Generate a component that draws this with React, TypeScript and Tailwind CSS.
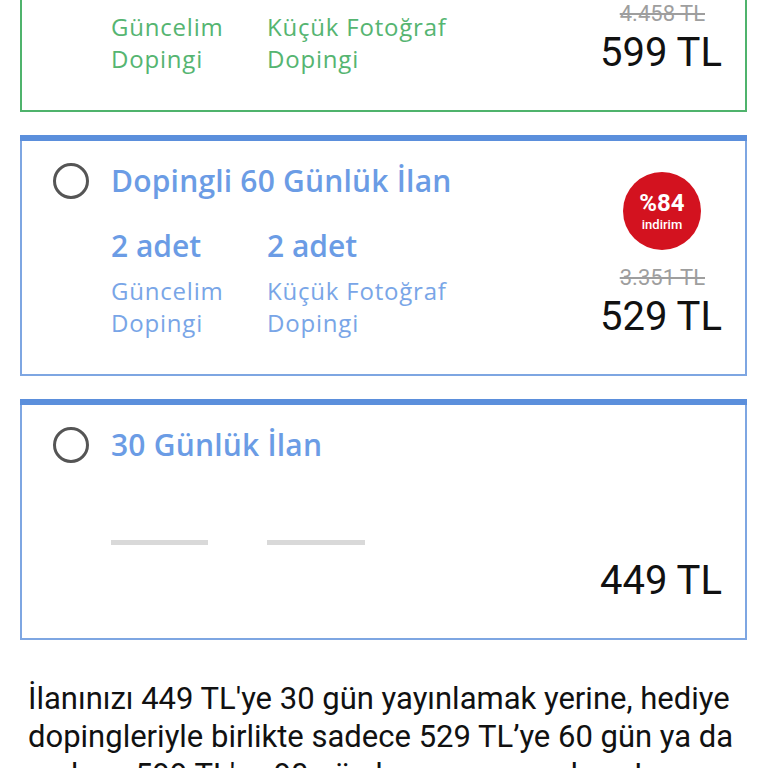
const font = { fontFamily: 'Roboto, "Noto Sans", sans-serif' }
const cardFont = { fontFamily: '"Open Sans", Roboto, sans-serif' }

type Plan = {
  title: string
  tone: 'green' | 'blue'
  gifts: boolean
  oldPrice?: string
  price: string
  badge?: string
}

const plans: Plan[] = [
  { title: 'Dopingli 90 Günlük İlan', tone: 'green', gifts: true, oldPrice: '4.458 TL', price: '599 TL', badge: '%87' },
  { title: 'Dopingli 60 Günlük İlan', tone: 'blue', gifts: true, oldPrice: '3.351 TL', price: '529 TL', badge: '%84' },
  { title: '30 Günlük İlan', tone: 'blue', gifts: false, price: '449 TL' },
]

function Radio() {
  return <div className="w-[36px] h-[36px] rounded-full border-[3px] border-[#555555] shrink-0" />
}

function PlanCard({ p }: { p: Plan }) {
  const green = p.tone === 'green'
  const frame = green ? 'border-[#4fb36c]' : 'border-[#7ea6e2]'
  const bar = green ? 'bg-[#4fb36c]' : 'bg-[#5b8fdc]'
  const text = green ? 'text-[#43ad62]' : 'text-[#6b9ce5]'

  return (
    <div className={`h-[241px] border-2 border-t-0 ${frame} flex flex-col`}>
      <div className={`h-[6px] -mx-[2px] ${bar}`} />
      <div className="flex flex-1">
        <div className="flex-1 pl-[31px] pt-[22px]" style={cardFont}>
          <div className="flex items-center gap-[22px]">
            <Radio />
            <span className={`text-[30px] leading-[36px] font-semibold tracking-[0.2px] ${text}`}>{p.title}</span>
          </div>
          {p.gifts ? (
            <div className={`flex pl-[58px] mt-[29px] ${text}`}>
              {['Güncelim Dopingi', 'Küçük Fotoğraf Dopingi'].map(g => (
                <div key={g} className="w-[156px] shrink-0">
                  <div className="text-[30px] leading-[36px] font-semibold">2 adet</div>
                  <div className="text-[24px] leading-[32px] mt-[11px] tracking-[0.8px] opacity-90 whitespace-nowrap">
                    {g.split(' ').slice(0, -1).join(' ')}
                    <br />
                    Dopingi
                  </div>
                </div>
              ))}
            </div>
          ) : (
            <div className="flex pl-[58px] mt-[77px]">
              <div className="w-[156px]">
                <div className="w-[97px] h-[5px] bg-[#d9d9d9]" />
              </div>
              <div className="w-[98px] h-[5px] bg-[#d9d9d9]" />
            </div>
          )}
        </div>
        <div className="flex flex-col items-end pr-[23px] w-[200px]">
          {p.badge ? (
            <div className="mt-[31px] mr-[21px] w-[78px] h-[78px] rounded-full bg-[#d3121f] flex flex-col items-center justify-center text-white">
              <span className="text-[24px] leading-[26px] font-bold">{p.badge}</span>
              <span className="text-[13px] leading-[17px] font-medium">indirim</span>
            </div>
          ) : (
            <div className="mt-[31px] h-[78px]" />
          )}
          <div className="h-[30px] mt-[13px] mr-[17px] text-[22px] leading-[30px] text-[#9e9e9e] line-through">
            {p.oldPrice ?? ''}
          </div>
          <div className="text-[40px] leading-[44px] text-[#111111] mt-[2px]">{p.price}</div>
        </div>
      </div>
    </div>
  )
}

export default function App() {
  return (
    <div className="bg-white w-[768px] h-[768px] overflow-hidden" style={font}>
      <div className="-mt-[129px] pl-[20px] pr-[21px] flex flex-col gap-[23px]">
        {plans.map(p => (
          <PlanCard key={p.title} p={p} />
        ))}
      </div>
      <p className="px-[28px] mt-[40px] text-[31px] leading-[38px] text-[#111111]">
        İlanınızı 449 TL'ye 30 gün yayınlamak yerine, hediye dopingleriyle birlikte sadece 529 TL’ye 60 gün ya da
        sadece 599 TL'ye 90 gün boyunca yayınlayın!
      </p>
    </div>
  )
}
